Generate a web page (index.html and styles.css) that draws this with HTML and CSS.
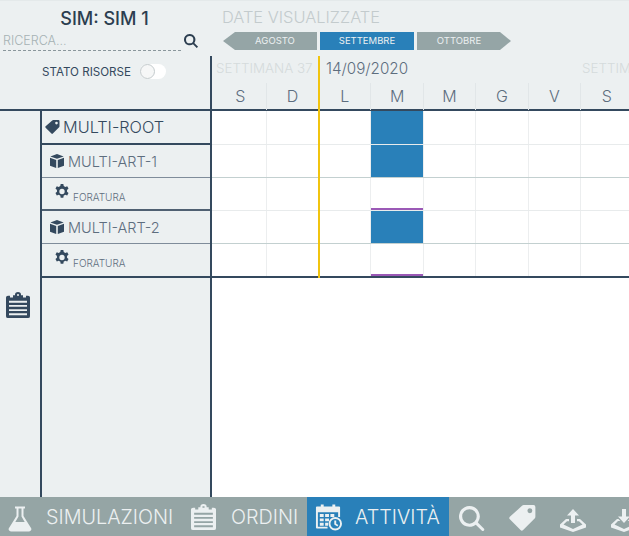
FILE: index.html
```html
<!DOCTYPE html>
<html lang="it">

<head>
    <meta charset="UTF-8">
    <title>Attività</title>
    <link rel="stylesheet" href="styles.css">
</head>

<body>
    <svg class="sprites" aria-hidden="true">
        <symbol id="i-search" viewBox="0 0 24 24">
            <path d="M10 1.500a8.500 8.500 0 1 0 5 15.400l5.600 5.600 2-2-5.600-5.600A8.500 8.500 0 0 0 10 1.500zm0 3a5.500 5.500 0 1 1 0 11 5.500 5.500 0 0 1 0-11z" />
        </symbol>
        <symbol id="i-search-thin" viewBox="0 0 26 26">
            <path d="M11 1a10 10 0 1 0 6.100 17.900l6 6a1.500 1.500 0 0 0 2-2.100l-6-6A10 10 0 0 0 11 1zm0 3a7 7 0 1 1 0 14 7 7 0 0 1 0-14z" />
        </symbol>
        <symbol id="i-tag" viewBox="1 2 22 21">
            <path d="M13 2h8a1.500 1.500 0 0 1 1.500 1.500v8a2 2 0 0 1-.6 1.400L12.500 22.300a1.500 1.500 0 0 1-2.100 0l-8.700-8.700a1.500 1.500 0 0 1 0-2.100L11.600 2.600A2 2 0 0 1 13 2zm5 2.600a2 2 0 1 0 0 4 2 2 0 0 0 0-4z" />
        </symbol>
        <symbol id="i-cube" viewBox="1.500 1.500 21 21">
            <path d="M12 1.500l10 3.600L12 8.800 2 5.100zM1.500 7l9.300 3.400v12L1.500 19zM22.500 7v12l-9.300 3.400v-12z" />
        </symbol>
        <symbol id="i-cog" viewBox="1.500 1 21 22" preserveAspectRatio="none">
            <path d="M10 1h4l.6 3a8 8 0 0 1 2.300 1.300l2.900-1 2 3.400-2.300 2a8 8 0 0 1 0 2.600l2.300 2-2 3.400-2.900-1a8 8 0 0 1-2.300 1.300l-.6 3h-4l-.6-3a8 8 0 0 1-2.300-1.300l-2.900 1-2-3.400 2.300-2a8 8 0 0 1 0-2.600l-2.300-2 2-3.400 2.900 1A8 8 0 0 1 9.400 4zm2 7a4 4 0 1 0 0 8 4 4 0 0 0 0-8z" />
        </symbol>
        <symbol id="i-clipboard" viewBox="0 0 24 28" preserveAspectRatio="none">
            <path d="M9 3.500V3a3 3 0 0 1 6 0v.5h2V6h3V4h2a2 2 0 0 1 2 2v20a2 2 0 0 1-2 2H2a2 2 0 0 1-2-2V6a2 2 0 0 1 2-2h2v2h3V3.500zM11 2.500v1.500h2V2.500zM3 9.500v2h18v-2zM3 14v2h18v-2zM3 18.500v2h18v-2zM3 23v2h18v-2z" fill-rule="evenodd" />
        </symbol>
        <symbol id="i-flask" viewBox="0 0 24 26">
            <path d="M7 1h10v2h-1.500v7.500L23 22.500a2.300 2.300 0 0 1-2 3.500H3a2.300 2.300 0 0 1-2-3.500L8.500 10.500V3H7zM10.500 3v8.100L7.300 16.500h9.400l-3.200-5.400V3z" fill-rule="evenodd" />
        </symbol>
        <symbol id="i-upload" viewBox="0 0 26 24">
            <path d="M13 1l6 6.500h-4V15h-4V7.500H7zM0 16.500L6 11h3v2.200H7L3.500 16.500l9.500 4.500 9.500-4.500L19 13.200h-2V11h3l6 5.500v3L13 24 0 19.500z" />
        </symbol>
        <symbol id="i-download" viewBox="0 0 26 24">
            <path d="M11 1h4v7.500h4L13 15 7 8.500h4zM0 16.500L6 11h1.500l1.800 2H7L3.500 16.500l9.500 4.500 9.500-4.500L19 13h-2.300l1.800-2H20l6 5.500v3L13 24 0 19.500z" />
        </symbol>
    </svg>

    <header class="top">
        <div class="side-head">
            <h1 class="sim-title">SIM: SIM 1</h1>
            <div class="search">
                <span class="search-input">RICERCA...</span>
                <svg class="search-icon"><use href="#i-search" /></svg>
            </div>
            <div class="stato">
                <span>STATO RISORSE</span>
                <span class="toggle"><span class="toggle-knob"></span></span>
            </div>
        </div>
        <div class="dates-head">
            <div class="dates-title">DATE VISUALIZZATE</div>
            <div class="months">
                <div class="month month-prev">AGOSTO</div>
                <div class="month month-active">SETTEMBRE</div>
                <div class="month month-next">OTTOBRE</div>
            </div>
        </div>
    </header>

    <div class="weeks-row">
        <div class="side-spacer"></div>
        <div class="calendar-head">
            <div class="weeks">
                <div class="week week-a">SETTIMANA 37</div>
                <div class="week week-b">14/09/2020</div>
                <div class="week week-c">SETTIMANA 38</div>
            </div>
            <div class="days">
                <div class="day">S</div>
                <div class="day">D</div>
                <div class="day">L</div>
                <div class="day">M</div>
                <div class="day">M</div>
                <div class="day">G</div>
                <div class="day">V</div>
                <div class="day">S</div>
            </div>
        </div>
    </div>

    <main class="body-row">
        <div class="rail">
            <svg class="rail-icon"><use href="#i-clipboard" /></svg>
        </div>
        <div class="tree">
            <div class="node node-root">
                <svg class="icon-tag"><use href="#i-tag" /></svg>MULTI-ROOT
            </div>
            <div class="node node-art">
                <svg class="icon-cube"><use href="#i-cube" /></svg>MULTI-ART-1
            </div>
            <div class="node node-op">
                <svg class="icon-cog"><use href="#i-cog" /></svg><span>FORATURA</span>
            </div>
            <div class="node node-art">
                <svg class="icon-cube"><use href="#i-cube" /></svg>MULTI-ART-2
            </div>
            <div class="node node-op node-last">
                <svg class="icon-cog"><use href="#i-cog" /></svg><span>FORATURA</span>
            </div>
        </div>
        <div class="gantt">
            <div class="gantt-row row-soft">
                <i></i><i></i><i></i><i class="busy"></i><i></i><i></i><i></i><i></i>
            </div>
            <div class="gantt-row row-hard">
                <i></i><i></i><i></i><i class="busy"></i><i></i><i></i><i></i><i></i>
            </div>
            <div class="gantt-row row-soft">
                <i></i><i></i><i></i><i class="mark"></i><i></i><i></i><i></i><i></i>
            </div>
            <div class="gantt-row row-hard">
                <i></i><i></i><i></i><i class="busy"></i><i></i><i></i><i></i><i></i>
            </div>
            <div class="gantt-row row-last">
                <i></i><i></i><i></i><i class="mark"></i><i></i><i></i><i></i><i></i>
            </div>
        </div>
        <div class="today-line"></div>
    </main>

    <nav class="bottom">
        <a class="tab tab-sim"><svg class="tab-flask"><use href="#i-flask" /></svg>SIMULAZIONI</a>
        <a class="tab tab-ord"><svg class="tab-clip"><use href="#i-clipboard" /></svg>ORDINI</a>
        <a class="tab tab-active">
            <svg class="tab-cal" viewBox="0 0 28 28">
                <path d="M2 3h4V1h3v2h9V1h3v2h4a1 1 0 0 1 1 1v10h-2V9H3v15h10v2H2a1 1 0 0 1-1-1V4a1 1 0 0 1 1-1z" />
                <path d="M5 11h4v3H5zM10.500 11h4v3h-4zM16 11h4v3h-4zM5 15.500h4v3H5zM10.500 15.500h4v3h-4zM5 20h4v3H5zM10.500 20h3v3h-3z" />
                <path d="M21 14a7 7 0 1 0 0 14 7 7 0 0 0 0-14zm0 2a5 5 0 1 1 0 10 5 5 0 0 1 0-10zm-1 1.500v4.300l3.200 2 1-1.500-2.200-1.400v-3.400z" fill-rule="evenodd" />
            </svg>ATTIVITÀ
        </a>
        <a class="tab tab-icon"><svg class="tab-search"><use href="#i-search-thin" /></svg></a>
        <a class="tab tab-icon"><svg class="tab-tag"><use href="#i-tag" /></svg></a>
        <a class="tab tab-icon"><svg class="tab-up"><use href="#i-upload" /></svg></a>
        <a class="tab tab-icon"><svg class="tab-down"><use href="#i-download" /></svg></a>
    </nav>
</body>

</html>
```

FILE: styles.css
```css
* {
    box-sizing: border-box;
}

html,
body {
    margin: 0;
    height: 100%;
}

body {
    width: 629px;
    height: 536px;
    overflow: hidden;
    display: flex;
    flex-direction: column;
    font-family: 'Inter', 'Liberation Sans', sans-serif;
    color: #2c3e50;
    background: #ecf0f1;
}

.sprites {
    display: none;
}

svg {
    fill: currentColor;
    flex: none;
}

/* header */
.top {
    display: flex;
    height: 56px;
    border-top: 1px solid #e4e9ea;
}

.side-head {
    width: 212px;
    flex: none;
    position: relative;
}

.sim-title {
    margin: 0;
    padding: 8px 0 0 0;
    width: 209px;
    text-align: center;
    font-size: 18px;
    line-height: 19px;
    font-weight: 500;
}

.search {
    display: flex;
    justify-content: space-between;
    align-items: center;
    padding: 3px 13px 0 3px;
}

.search-input {
    width: 178px;
    height: 20px;
    line-height: 19px;
    font-size: 12.500px;
    font-weight: 300;
    color: #a6b2b4;
    border-bottom: 1px dashed #8a979c;
}

.search-icon {
    width: 16px;
    height: 16px;
}

.stato {
    position: absolute;
    left: 42px;
    top: 63px;
    display: flex;
    align-items: center;
    gap: 9px;
    font-size: 11.600px;
    color: #34495e;
    z-index: 1;
}

.toggle {
    width: 26px;
    height: 15px;
    border-radius: 8px;
    background: #fff;
    display: block;
}

.toggle-knob {
    display: block;
    width: 15px;
    height: 15px;
    border-radius: 50%;
    background: #f6f7f7;
    border: 1px solid #c4cbcd;
}

.dates-head {
    flex: 1;
    padding: 7px 0 0 10px;
}

.dates-title {
    font-size: 16.400px;
    line-height: 19px;
    font-weight: 300;
    color: #c3cbcd;
}

.months {
    display: flex;
    gap: 3px;
    margin-top: 5px;
    margin-left: 1px;
}

.month {
    width: 94px;
    height: 18px;
    line-height: 18px;
    text-align: center;
    font-size: 9.500px;
    color: #ecf0f1;
    background: #95a5a6;
}

.month-prev {
    clip-path: polygon(12px 0, 100% 0, 100% 100%, 12px 100%, 0 50%);
    padding-left: 10px;
}

.month-active {
    background: #2980b9;
}

.month-next {
    clip-path: polygon(0 0, 83px 0, 100% 50%, 83px 100%, 0 100%);
    padding-right: 10px;
}

/* week and day labels */
.weeks-row {
    display: flex;
    height: 55px;
    border-bottom: 2px solid #34495e;
}

.side-spacer {
    width: 212px;
    flex: none;
    border-right: 2px solid #34495e;
}

.calendar-head {
    flex: 1;
    min-width: 0;
}

.weeks {
    display: grid;
    grid-template-columns: 106px 262px 1fr;
    height: 27px;
    overflow: hidden;
}

.week {
    white-space: nowrap;
    overflow: hidden;
    font-size: 13.400px;
    line-height: 25px;
    font-weight: 300;
    color: #d5dbdc;
    padding-left: 4px;
}

.week-b {
    padding-left: 8px;
    color: #5d6d7e;
    font-size: 15.200px;
}

.week-c {
    padding-left: 2px;
}

.days {
    display: grid;
    grid-template-columns: 54.700px repeat(7, 52.400px);
    height: 26px;
}

.day {
    text-align: center;
    font-size: 16px;
    line-height: 27px;
    font-weight: 300;
    color: #5d6d7e;
    border-right: 1px solid #e1e6e8;
}

.day:first-child {
    padding-left: 3px;
}

/* tree and gantt */
.body-row {
    flex: 1;
    display: flex;
    position: relative;
    min-height: 0;
}

.rail {
    width: 42px;
    flex: none;
    border-right: 2px solid #34495e;
    display: flex;
    flex-direction: column;
    align-items: center;
    padding-top: 181px;
}

.rail-icon {
    width: 24px;
    height: 26px;
    margin-right: 4px;
    color: #34495e;
}

.tree {
    width: 170px;
    flex: none;
    border-right: 2px solid #34495e;
}

.node {
    display: flex;
    height: 33px;
    align-items: center;
    white-space: nowrap;
    border-bottom: 1px solid #7f8c9a;
    font-weight: 300;
    color: #5d6d7e;
    font-size: 14.500px;
}

.node-root {
    height: 34px;
    font-size: 16.300px;
    color: #34495e;
    border-bottom: 2px solid #34495e;
    padding-left: 3px;
}

.node-art {
    padding-left: 8px;
}

.node-op {
    padding-left: 13px;
    height: 33px;
    border-bottom: 2px solid #4f6072;
    align-items: flex-start;
    padding-top: 6px;
}

.node-last {
    border-bottom: 2px solid #34495e;
    height: 34px;
}

.node-op span {
    font-size: 10px;
    padding-top: 7px;
}

.node svg {
    color: #34495e;
}

.icon-tag {
    width: 15px;
    height: 14px;
    margin-right: 3px;
}

.icon-cube {
    width: 14px;
    height: 14px;
    margin-right: 4px;
}

.icon-cog {
    width: 14px;
    height: 15px;
    margin-right: 4px;
}

.gantt {
    flex: 1;
    min-width: 0;
    background: #fff;
}

.gantt-row {
    display: grid;
    grid-template-columns: 54.700px repeat(7, 52.400px);
    height: 33px;
    border-bottom: 1px solid #e8ebec;
}

.gantt-row:first-child {
    height: 34px;
}

.row-hard {
    border-bottom-color: #c3d0d0;
}

.row-last {
    height: 34px;
    border-bottom: 2px solid #34495e;
}

.gantt-row i {
    display: block;
    border-right: 1px solid #eceeef;
}

.gantt-row .busy {
    background: #2980b9;
}

.gantt-row .mark {
    box-shadow: inset 0 -2px 0 #9b59b6;
}

.today-line {
    position: absolute;
    left: 318px;
    top: -55px;
    height: 222px;
    width: 2px;
    background: #f1c40f;
}

/* bottom tabs */
.bottom {
    height: 39px;
    background: #95a5a5;
    color: #ecf0f1;
    display: flex;
    overflow: hidden;
}

.tab {
    display: flex;
    flex: none;
    align-items: center;
    font-size: 19.800px;
    font-weight: 300;
    white-space: nowrap;
}

.tab-sim {
    padding-left: 8px;
    width: 191px;
}

.tab-flask {
    width: 24px;
    height: 27px;
    margin: 3px 14px 0 0;
}

.tab-ord {
    width: 116px;
}

.tab-clip {
    width: 25px;
    height: 26px;
    margin-right: 15px;
}

.tab-active {
    width: 142px;
    padding-left: 8px;
    background: #2980b9;
}

.tab-cal {
    width: 27px;
    height: 28px;
    margin-right: 13px;
}

.tab-icon {
    width: 51px;
}

.tab-search {
    width: 27px;
    height: 27px;
    margin: 3px 0 0 9px;
}

.tab-tag {
    width: 27px;
    height: 26px;
    margin: 3px 0 0 9px;
}

.tab-up {
    width: 26px;
    height: 24px;
    margin: 6px 0 0 9px;
}

.tab-down {
    width: 26px;
    height: 24px;
    margin: 6px 0 0 9px;
}
```
